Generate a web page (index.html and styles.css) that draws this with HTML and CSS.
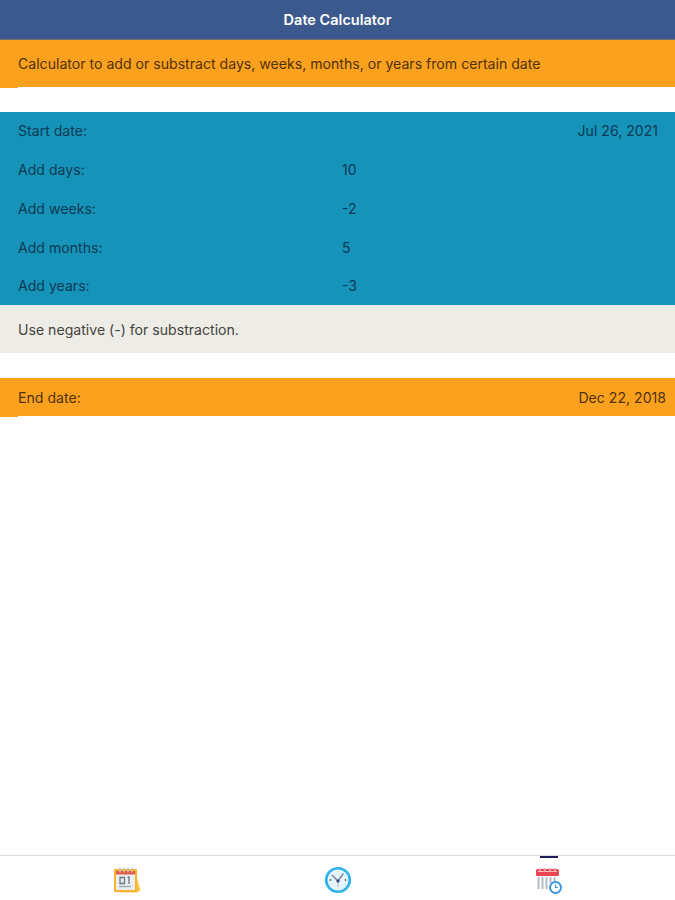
FILE: index.html
```html
<!DOCTYPE html>
<html lang="en">
<head>
<meta charset="utf-8">
<title>Date Calculator</title>
<link rel="stylesheet" href="styles.css">
</head>
<body>
<div class="app">
  <header class="nav">Date Calculator</header>
  <main class="content">
    <p class="row banner"><span class="tick"></span>Calculator to add or substract days, weeks, months, or years from certain date</p>
    <section class="inputs">
      <div class="field"><span>Start date:</span><span class="end">Jul 26, 2021</span></div>
      <div class="field"><span>Add days:</span><span class="val">10</span></div>
      <div class="field"><span>Add weeks:</span><span class="val">-2</span></div>
      <div class="field"><span>Add months:</span><span class="val">5</span></div>
      <div class="field"><span>Add years:</span><span class="val">-3</span></div>
    </section>
    <p class="row note">Use negative (-) for substraction.</p>
    <div class="field result"><span class="tick"></span><span>End date:</span><span class="end">Dec 22, 2018</span></div>
  </main>
  <nav class="tabs">
    <div class="tab">
      <svg width="28" height="28" viewBox="0 0 28 28">
        <path d="M22 5 L27.500 24 L24 26.500 L6 26.500 Z" fill="#fbc74a"/>
        <rect x="1" y="3" width="23" height="23" rx="1" fill="#f8b133"/>
        <rect x="3" y="5" width="19" height="19" fill="#eceff0"/>
        <rect x="3" y="5" width="19" height="3.500" fill="#e65a45"/>
        <path d="M7 1.500v5M11 1.500v5M15 1.500v5M19 1.500v5" stroke="#c9c3b5" stroke-width="1.500"/>
        <path d="M7 11.500h4.500v6H7zM14.500 11.500l1.500-.500V18" fill="none" stroke="#6a7684" stroke-width="1.300"/>
        <path d="M6 20.500h12" stroke="#a3acb4" stroke-width="1.500"/>
      </svg>
    </div>
    <div class="tab">
      <svg width="28" height="28" viewBox="0 0 28 28">
        <circle cx="14" cy="14" r="11.800" fill="#e6f5fc" stroke="#2cb3ea" stroke-width="2.600"/>
        <path d="M14 15 L8.500 9.500M14 15 L19 8" stroke="#7d85a4" stroke-width="1.500" stroke-linecap="round"/>
        <path d="M14 15v6" stroke="#bcc9da" stroke-width="1.500"/>
        <circle cx="14" cy="15" r="1.600" fill="#3f3a78"/>
        <circle cx="6.500" cy="14" r=".9" fill="#55608a"/><circle cx="21.500" cy="14" r=".9" fill="#55608a"/>
      </svg>
    </div>
    <div class="tab tab-active">
      <span class="marker"></span>
      <svg class="icon-dates" width="28" height="28" viewBox="0 0 28 28">
        <rect x="0" y="1" width="23" height="7" rx="1.500" fill="#ea4453"/>
        <path d="M4 0v3M9 0v3M14 0v3M19 0v3" stroke="#f6a9ae" stroke-width="1.500"/>
        <path d="M2 3.500h19" stroke="#f6b9bd" stroke-width="1"/>
        <path d="M2.500 9v12M6.500 9v12M10.500 9v12M14.500 9v6M18.500 9v4" stroke="#b3bac8" stroke-width="2"/>
        <circle cx="19.500" cy="19.500" r="5.500" fill="#fff" stroke="#3a95e2" stroke-width="2"/>
        <path d="M19.500 16.500v3h2.500" fill="none" stroke="#3a95e2" stroke-width="1.200"/>
      </svg>
    </div>
  </nav>
</div>
</body>
</html>
```
FILE: styles.css
```css
* { box-sizing: border-box; }
html, body { margin: 0; height: 100%; }
body {
  font-family: Inter, "Liberation Sans", sans-serif;
  font-size: 14.100px;
  color: #2a2a2a;
  background: #fff;
}
.app { display: flex; flex-direction: column; height: 900px; overflow: hidden; }
.nav {
  height: 40px;
  background: #3c598e;
  border-bottom: 1px solid #6f6f70;
  color: #fff;
  font-size: 14.500px;
  font-weight: 600;
  display: flex;
  align-items: center;
  justify-content: center;
}
.content { flex: 1; }
.row { margin: 0; padding: 0 18px; display: flex; align-items: center; position: relative; }
.banner { height: 47px; background: #fca11e; color: #4f3208; margin-bottom: 25px; padding-bottom: 1px; }
.tick { position: absolute; left: 0; bottom: -1px; width: 18px; height: 1px; background: #fca11e; }
.inputs { background: #1693b8; color: #0d3a55; height: 193px; display: grid; grid-template-rows: 38.500px 39px 39px 38.500px 38px; }
.inputs .field { height: auto; padding-bottom: 1px; }
.field { height: 38px; padding: 0 17px 0 18px; display: flex; align-items: center; position: relative; }
.field .val { position: absolute; left: 342px; }
.field .end { margin-left: auto; }
.note { height: 48px; background: #eeece6; color: #44443f; margin-bottom: 25px; }
.result { background: #fca11e; color: #4f3208; padding-right: 9px; }
.tabs {
  height: 45px;
  padding: 0 19px 0 21px;
  border-top: 1px solid #dcdcdc;
  display: grid;
  grid-template-columns: repeat(3, 1fr);
}
.tab { display: flex; justify-content: center; align-items: flex-start; padding-top: 10px; position: relative; }
.icon-dates { margin-top: 2px; }
.marker { position: absolute; top: 0; left: 50%; width: 18px; height: 2px; margin-left: -10px; background: #1f1c5e; }
```
